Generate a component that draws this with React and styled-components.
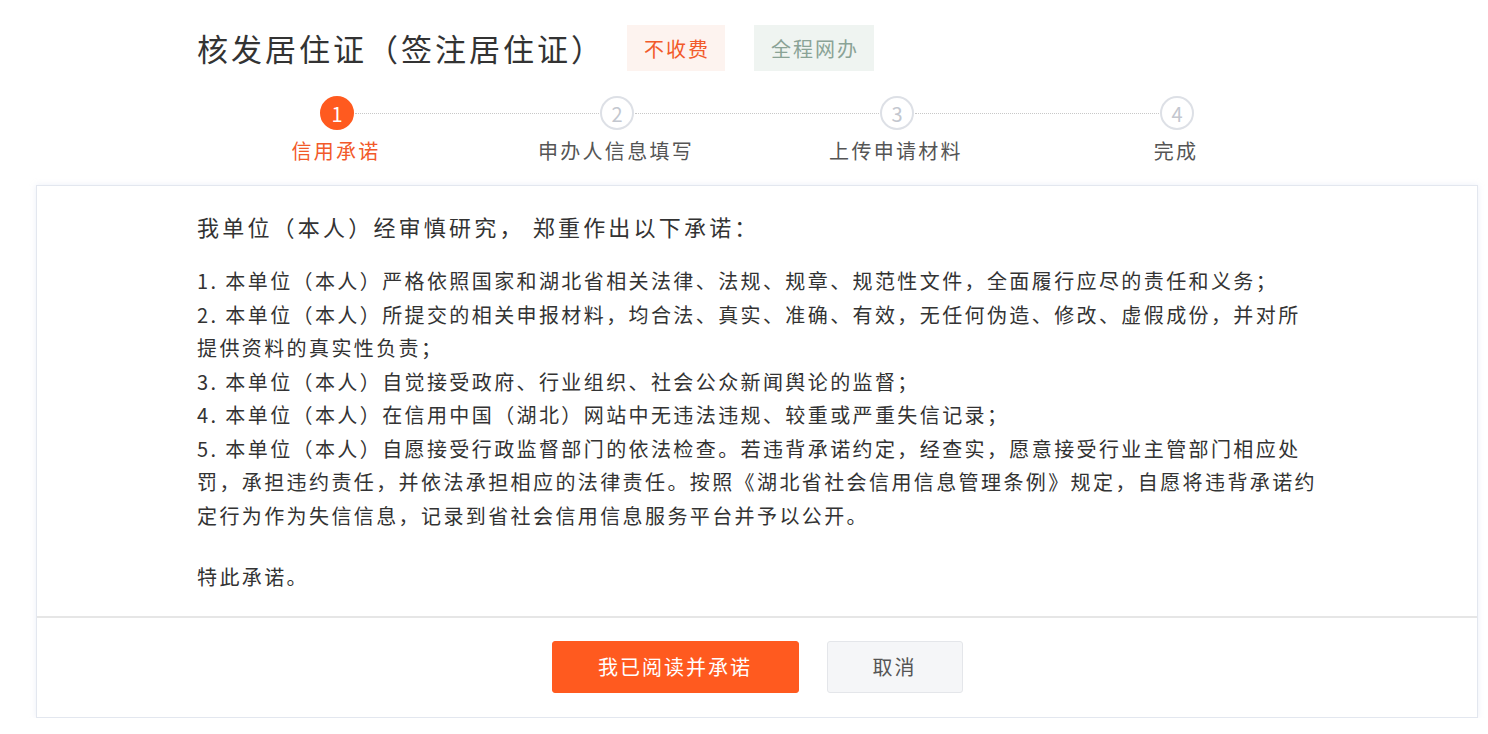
import styled, { createGlobalStyle } from "styled-components";

const GlobalStyle = createGlobalStyle`
  html, body {
    margin: 0;
    padding: 0;
    background: #ffffff;
  }
  body {
    font-family: "Noto Sans CJK SC", "Noto Sans", sans-serif;
    color: #333333;
  }
`;

const Page = styled.div`
  width: 1442px;
  margin-left: 36px;
  padding-top: 25px;
`;

const Inner = styled.div`
  width: 1120px;
  margin: 0 auto;
`;

const Header = styled.div`
  display: flex;
  align-items: center;
  height: 46px;
`;

const Title = styled.h1`
  margin: 0 22px 0 0;
  font-size: 31px;
  font-weight: 400;
  letter-spacing: 3px;
  color: #333333;
  line-height: 46px;
`;

const Tag = styled.span`
  display: inline-flex;
  align-items: center;
  justify-content: center;
  height: 46px;
  padding: 0 15px 0 17px;
  margin-right: 29px;
  font-size: 20px;
  letter-spacing: 2px;
  background: ${(p) => (p.$tone === "orange" ? "#fdf3ef" : "#eff4f1")};
  color: ${(p) => (p.$tone === "orange" ? "#f25a2a" : "#8aa396")};
`;

const Track = styled.div`
  display: flex;
  align-items: center;
  padding: 0 123px;
  margin-top: 25px;
`;

const Circle = styled.div`
  width: 34px;
  height: 34px;
  box-sizing: border-box;
  border-radius: 50%;
  display: flex;
  align-items: center;
  justify-content: center;
  font-size: 20px;
  flex-shrink: 0;
  background: ${(p) => (p.$active ? "#ff5a1f" : "#ffffff")};
  color: ${(p) => (p.$active ? "#ffffff" : "#c3c7cf")};
  border: 2px solid ${(p) => (p.$active ? "#ff5a1f" : "#dde0e6")};
`;

const Connector = styled.div`
  flex: 1;
  border-top: 1px dotted #c8c8c8;
  margin: 0 1px;
`;

const Labels = styled.div`
  display: grid;
  grid-template-columns: repeat(4, 280px);
  margin-top: 7px;
  margin-left: -1px;
`;

const Label = styled.div`
  text-align: center;
  font-size: 20px;
  line-height: 28px;
  letter-spacing: 2.3px;
  color: ${(p) => (p.$active ? "#f25a2a" : "#555555")};
`;

const Panel = styled.div`
  margin-top: 20px;
  border: 1px solid #e3e7ef;
  box-shadow: 0 0 6px rgba(200, 210, 235, 0.35);
  background: #ffffff;
`;

const Body = styled.div`
  padding: 23px 0 22px;
`;

const Lead = styled.p`
  margin: 0 0 21px;
  font-size: 22px;
  line-height: 34px;
  letter-spacing: 3.2px;
  color: #333333;
`;

const Clause = styled.p`
  margin: 0;
  font-size: 20px;
  line-height: 33.5px;
  letter-spacing: 2.4px;
  color: #333333;
`;

const Closing = styled(Clause)`
  margin-top: 28px;
`;

const Footer = styled.div`
  border-top: 2px solid #e6e6e6;
  display: flex;
  justify-content: center;
  gap: 28px;
  padding: 23px 0 24px;
`;

const Button = styled.button`
  height: 52px;
  border-radius: 3px;
  font-family: inherit;
  font-size: 20px;
  letter-spacing: 2px;
  cursor: pointer;
  width: ${(p) => (p.$primary ? "247px" : "136px")};
  background: ${(p) => (p.$primary ? "#ff5a1f" : "#f5f6f8")};
  color: ${(p) => (p.$primary ? "#ffffff" : "#555555")};
  border: 1px solid ${(p) => (p.$primary ? "#ff5a1f" : "#e4e6ea")};
`;

const steps = ["信用承诺", "申办人信息填写", "上传申请材料", "完成"];

const clauses = [
  "1. 本单位（本人）严格依照国家和湖北省相关法律、法规、规章、规范性文件，全面履行应尽的责任和义务；",
  "2. 本单位（本人）所提交的相关申报材料，均合法、真实、准确、有效，无任何伪造、修改、虚假成份，并对所提供资料的真实性负责；",
  "3. 本单位（本人）自觉接受政府、行业组织、社会公众新闻舆论的监督；",
  "4. 本单位（本人）在信用中国（湖北）网站中无违法违规、较重或严重失信记录；",
  "5. 本单位（本人）自愿接受行政监督部门的依法检查。若违背承诺约定，经查实，愿意接受行业主管部门相应处罚，承担违约责任，并依法承担相应的法律责任。按照《湖北省社会信用信息管理条例》规定，自愿将违背承诺约定行为作为失信信息，记录到省社会信用信息服务平台并予以公开。",
];

export default function App() {
  const current = 0;
  return (
    <>
      <GlobalStyle />
      <Page>
        <Inner>
          <Header>
            <Title>核发居住证（签注居住证）</Title>
            <Tag $tone="orange">不收费</Tag>
            <Tag $tone="green">全程网办</Tag>
          </Header>
          <Track>
            {steps.map((s, i) => (
              <>
                {i > 0 && <Connector key={"c" + i} />}
                <Circle key={"s" + i} $active={i === current}>
                  {i + 1}
                </Circle>
              </>
            ))}
          </Track>
          <Labels>
            {steps.map((s, i) => (
              <Label key={s} $active={i === current}>
                {s}
              </Label>
            ))}
          </Labels>
        </Inner>
        <Panel>
          <Body>
            <Inner>
              <Lead>我单位（本人）经审慎研究， 郑重作出以下承诺：</Lead>
              {clauses.map((c) => (
                <Clause key={c}>{c}</Clause>
              ))}
              <Closing>特此承诺。</Closing>
            </Inner>
          </Body>
          <Footer>
            <Button $primary>我已阅读并承诺</Button>
            <Button>取消</Button>
          </Footer>
        </Panel>
      </Page>
    </>
  );
}
